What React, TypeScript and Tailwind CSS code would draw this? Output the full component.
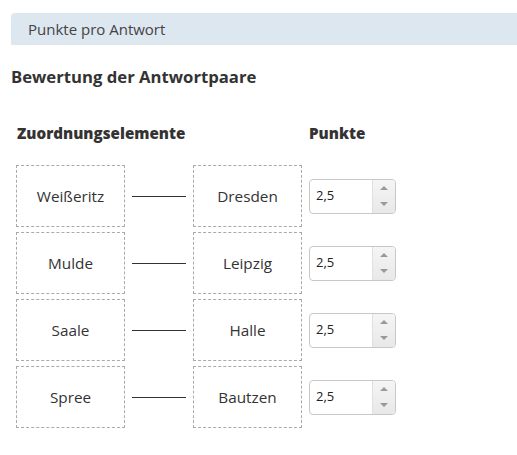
import React from "react";

const rows = [
  ["Weißeritz", "Dresden"],
  ["Mulde", "Leipzig"],
  ["Saale", "Halle"],
  ["Spree", "Bautzen"],
];

function Spinner() {
  return (
    <div className="flex w-[87px] h-[35px] border border-[#c8c8c8] rounded-[4px] overflow-hidden bg-white">
      <div className="flex-1 flex items-center pl-[6px] text-[13px] text-[#222]">2,5</div>
      <div className="w-[23px] flex flex-col border-l border-[#e0e0e0] bg-gradient-to-b from-[#f5f5f5] to-[#e8e8e8]">
        <div className="flex-1 flex items-center justify-center">
          <div className="w-0 h-0 border-l-[4px] border-r-[4px] border-b-[4px] border-l-transparent border-r-transparent border-b-[#999]" />
        </div>
        <div className="flex-1 flex items-center justify-center">
          <div className="w-0 h-0 border-l-[4px] border-r-[4px] border-t-[4px] border-l-transparent border-r-transparent border-t-[#999]" />
        </div>
      </div>
    </div>
  );
}

export default function App() {
  return (
    <div className="w-[517px] h-[455px] bg-white font-['Open_Sans',sans-serif] text-[#333] overflow-hidden">
      <div className="pt-[13px] pl-[11px]">
        <div className="h-[32px] bg-[#dde7f0] rounded-tl-[4px] flex items-center pl-[17px] text-[15px] text-[#444]">
          Punkte pro Antwort
        </div>
        <div className="mt-[21px] text-[16.7px] font-bold leading-[22px] text-[#333]">
          Bewertung der Antwortpaare
        </div>
      </div>
      <div className="pl-[17px] mt-[35px] flex text-[15.2px] font-extrabold leading-[20px] text-[#333]">
        <div className="w-[292px]">Zuordnungselemente</div>
        <div>Punkte</div>
      </div>
      <div className="mt-[22px] pl-[16px] flex flex-col gap-[5px]">
        {rows.map(([a, b]) => (
          <div key={a} className="flex items-center h-[62px]">
            <div className="w-[109px] h-[62px] border border-dashed border-[#aaa] flex items-center justify-center text-[15.3px] text-[#333]">
              {a}
            </div>
            <div className="w-[54px] h-[1px] bg-[#333] ml-[7px] mr-[7px]" />
            <div className="w-[109px] h-[62px] border border-dashed border-[#aaa] flex items-center justify-center text-[15.3px] text-[#333]">
              {b}
            </div>
            <div className="ml-[7px]">
              <Spinner />
            </div>
          </div>
        ))}
      </div>
    </div>
  );
}
